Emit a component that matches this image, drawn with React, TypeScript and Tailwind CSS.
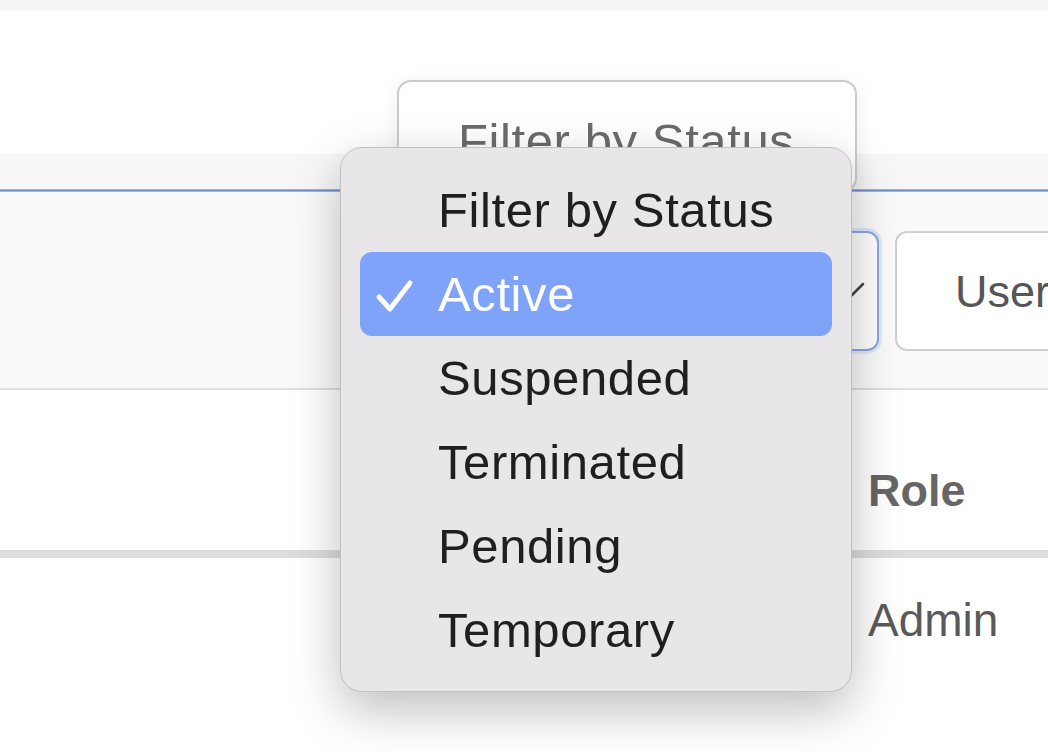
const statuses = ["Active", "Suspended", "Terminated", "Pending", "Temporary"];

function Chevron() {
  return (
    <svg width="30" height="18" viewBox="0 0 30 18" fill="none">
      <path d="M2 2 L15 15 L28 2" stroke="#444" strokeWidth="2.5" strokeLinecap="round" strokeLinejoin="round" />
    </svg>
  );
}

function StatusMenu() {
  return (
    <div className="absolute left-[340px] top-[147px] w-[512px] h-[545px] rounded-[22px] border border-[#c2c0c2] bg-[#e8e6e8] px-[19px] pt-[20px] tracking-[0.6px] shadow-[0_18px_50px_rgba(0,0,0,0.26)]">
      <div className="h-[84px] flex items-center pl-[78px] text-[#1f1f1f]">Filter by Status</div>
      {statuses.map((s) => {
        const active = s === "Active";
        return (
          <div
            key={s}
            className={`h-[84px] flex items-center rounded-[12px] ${active ? "bg-[#7fa3f8] text-white" : "text-[#1f1f1f]"}`}
          >
            <div className="w-[78px] flex justify-start pl-[15px] pt-[4px]">
              {active && (
                <svg width="40" height="36" viewBox="0 0 40 36" fill="none">
                  <path d="M4 19 L15 31 L35 5" stroke="white" strokeWidth="5" strokeLinecap="round" strokeLinejoin="round" />
                </svg>
              )}
            </div>
            <span>{s}</span>
          </div>
        );
      })}
    </div>
  );
}

export default function App() {
  return (
    <div className="relative w-[1048px] h-[752px] overflow-hidden bg-white font-['Liberation_Sans',Arial,sans-serif] text-[49px] leading-none">
      {/* page header strip */}
      <div className="h-[10px] bg-[#f5f5f5]" />
      <div className="h-[144px] bg-white" />

      {/* toolbar */}
      <div className="h-[35px] bg-[#f7f7f7]" />
      <div className="h-[3px] bg-[#6e8fc6] border-y border-[#9fb5dc]" />
      <div className="h-[198px] bg-[#fafafa] border-b-2 border-[#dedede] flex items-start pt-[39px] pl-[420px] gap-[16px]">
        <div className="w-[459px] h-[120px] shrink-0 rounded-[12px] border-2 border-[#86a8e2] bg-white shadow-[0_0_0_3px_rgba(130,165,230,0.22)] flex items-center justify-end pr-[12px]">
          <Chevron />
        </div>
        <div className="w-[320px] h-[120px] shrink-0 rounded-[12px] border-2 border-[#cfcfcf] bg-white flex items-center pl-[58px] text-[45px] text-[#555]">
          User Role
        </div>
      </div>

      {/* table */}
      <div className="grid grid-cols-[868px_1fr] h-[160px] bg-white">
        <div />
        <div className="pt-[78px] text-[45px] font-bold text-[#666]">Role</div>
      </div>
      <div className="h-[8px] bg-[#dddddd]" />
      <div className="grid grid-cols-[868px_1fr] h-[192px] bg-white">
        <div />
        <div className="pt-[39px] text-[46px] text-[#5a5a5a]">Admin</div>
      </div>

      {/* select button behind the open menu */}
      <div className="absolute left-[397px] top-[80px] w-[460px] h-[112px] rounded-[14px] border-2 border-[#cbcbcb] bg-white pl-[59px] pt-[35px] tracking-[0.6px] text-[#6b6b6b] shadow-[0_4px_20px_rgba(0,0,0,0.08)]">
        Filter by Status
      </div>

      <StatusMenu />
    </div>
  );
}
